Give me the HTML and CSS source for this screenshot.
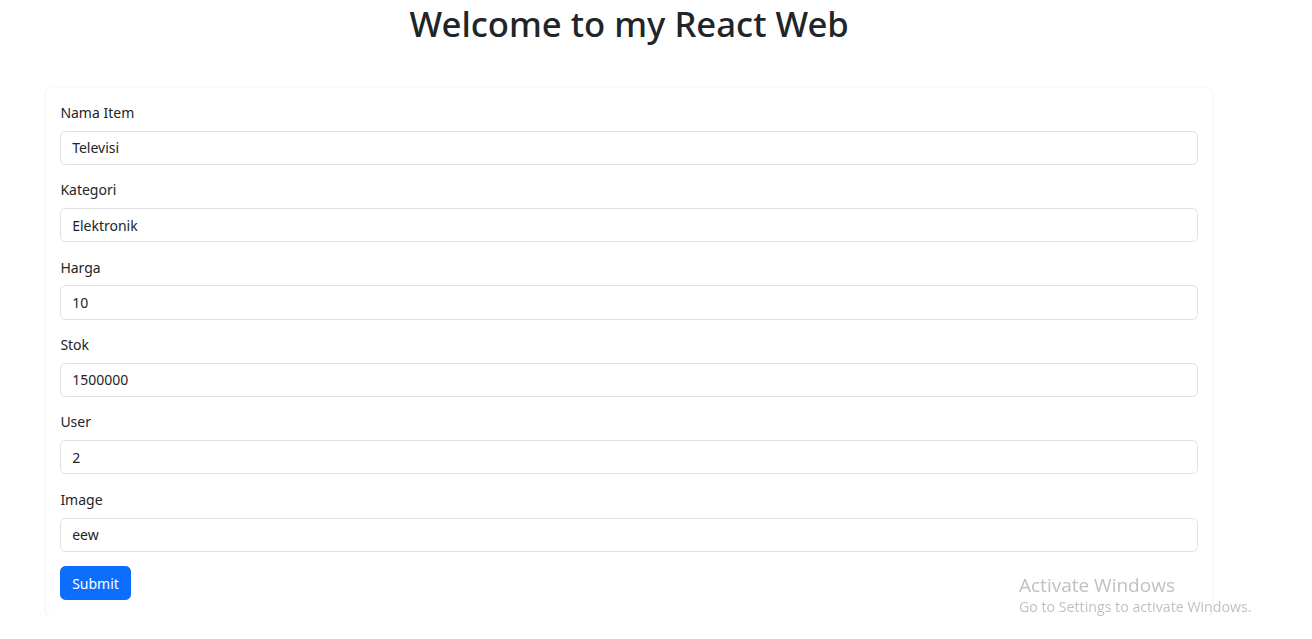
FILE: index.html
```html
<!DOCTYPE html>
<html lang="en">
<head>
<meta charset="utf-8">
<title>React Web</title>
<link rel="stylesheet" href="styles.css">
</head>
<body>
<div class="container">
  <h1 class="title">Welcome to my React Web</h1>
  <form class="card">
    <div class="field">
      <label class="label">Nama Item</label>
      <input class="control" type="text" value="Televisi">
    </div>
    <div class="field">
      <label class="label">Kategori</label>
      <input class="control" type="text" value="Elektronik">
    </div>
    <div class="field">
      <label class="label">Harga</label>
      <input class="control" type="text" value="10">
    </div>
    <div class="field">
      <label class="label">Stok</label>
      <input class="control" type="text" value="1500000">
    </div>
    <div class="field">
      <label class="label">User</label>
      <input class="control" type="text" value="2">
    </div>
    <div class="field">
      <label class="label">Image</label>
      <input class="control" type="text" value="eew">
    </div>
    <button class="btn" type="button">Submit</button>
  </form>
</div>
<div class="watermark">
  <div class="wm-title">Activate Windows</div>
  <div class="wm-sub">Go to Settings to activate Windows.</div>
</div>
</body>
</html>
```
FILE: styles.css
```css
* { box-sizing: border-box; }
html, body { margin: 0; padding: 0; background: #fff; }
body {
  font-family: "Noto Sans", "Open Sans", "Liberation Sans", sans-serif;
  font-size: 14px;
  line-height: 1.5;
  color: #212529;
}
.container {
  width: 1188px;
  margin-left: 35.2px;
  padding: 0 10.8px;
}
.title {
  margin: 0;
  padding-top: 2px;
  height: 45.2px;
  font-size: 34.7px;
  font-weight: 500;
  line-height: 43.2px;
  text-align: center;
}
.card {
  margin-top: 42.4px;
  padding: 14.4px;
  background: #fff;
  border-radius: 5.4px;
  box-shadow: 0 1.8px 3.6px rgba(0,0,0,0.08), 0 0 2px rgba(0,0,0,0.04);
}
.field { margin-bottom: 14.4px; }
.label {
  display: block;
  margin-bottom: 7.2px;
  line-height: 21.6px;
}
.control {
  display: block;
  width: 100%;
  height: 34.2px;
  padding: 5.4px 10.8px;
  font: inherit;
  color: #212529;
  background: #fff;
  border: 1px solid #dee2e6;
  border-radius: 5.4px;
  outline: none;
}
.btn {
  display: inline-block;
  height: 34.2px;
  padding: 5.4px 10.8px;
  font: inherit;
  color: #fff;
  background: #0d6efd;
  border: 1px solid #0d6efd;
  border-radius: 5.4px;
}
.watermark {
  position: fixed;
  left: 1019px;
  top: 572px;
  color: rgba(150,150,150,0.6);
  font-family: "Open Sans", "Noto Sans", sans-serif;
  pointer-events: none;
}
.wm-title { font-size: 19px; line-height: 26px; }
.wm-sub { font-size: 14.2px; line-height: 18px; }
```
